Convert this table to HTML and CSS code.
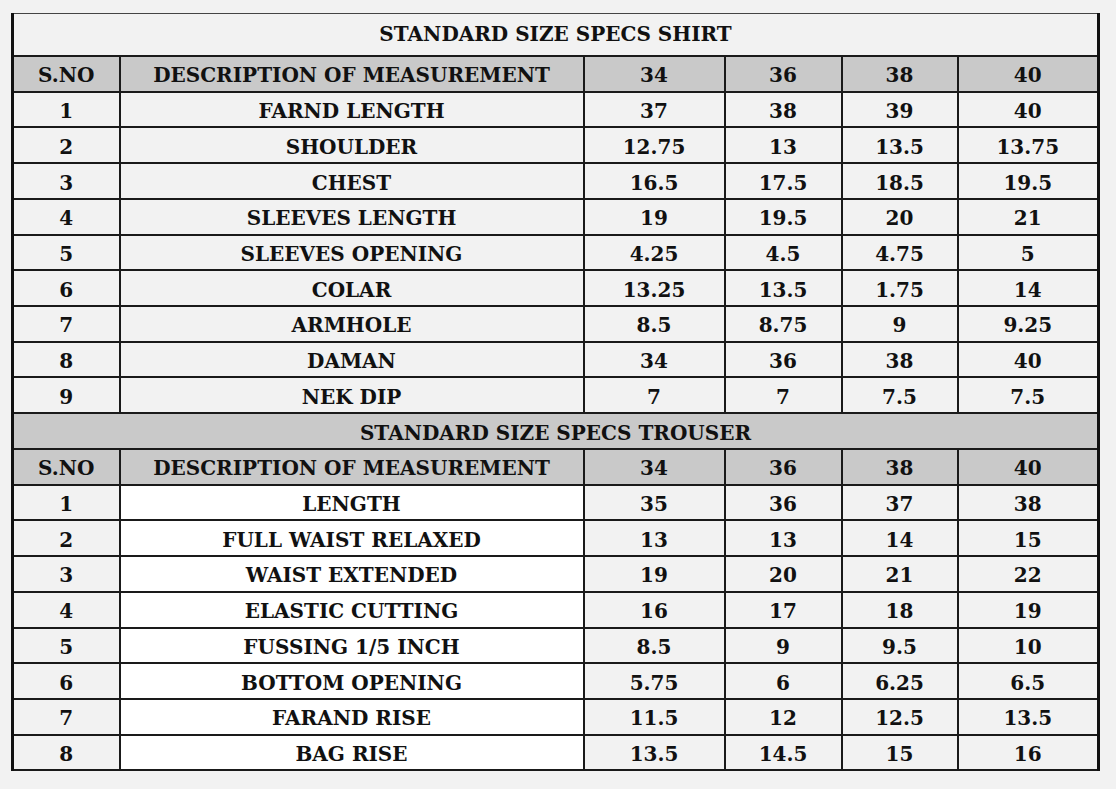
FILE: index.html
```html
<!DOCTYPE html>
<html>
<head>
<meta charset="utf-8">
<link rel="stylesheet" href="styles.css">
</head>
<body>
<table class="specs">
  <colgroup>
    <col class="c-sno"><col class="c-desc"><col class="c-34"><col class="c-36"><col class="c-38"><col class="c-40">
  </colgroup>
  <tbody>
    <tr class="title first"><td colspan="6">STANDARD SIZE SPECS SHIRT</td></tr>
    <tr class="head"><td>S.NO</td><td>DESCRIPTION OF MEASUREMENT</td><td>34</td><td>36</td><td>38</td><td>40</td></tr>
    <tr><td>1</td><td>FARND LENGTH</td><td>37</td><td>38</td><td>39</td><td>40</td></tr>
    <tr><td>2</td><td>SHOULDER</td><td>12.75</td><td>13</td><td>13.5</td><td>13.75</td></tr>
    <tr><td>3</td><td>CHEST</td><td>16.5</td><td>17.5</td><td>18.5</td><td>19.5</td></tr>
    <tr><td>4</td><td>SLEEVES LENGTH</td><td>19</td><td>19.5</td><td>20</td><td>21</td></tr>
    <tr><td>5</td><td>SLEEVES OPENING</td><td>4.25</td><td>4.5</td><td>4.75</td><td>5</td></tr>
    <tr><td>6</td><td>COLAR</td><td>13.25</td><td>13.5</td><td>1.75</td><td>14</td></tr>
    <tr><td>7</td><td>ARMHOLE</td><td>8.5</td><td>8.75</td><td>9</td><td>9.25</td></tr>
    <tr><td>8</td><td>DAMAN</td><td>34</td><td>36</td><td>38</td><td>40</td></tr>
    <tr><td>9</td><td>NEK DIP</td><td>7</td><td>7</td><td>7.5</td><td>7.5</td></tr>
    <tr class="title gray"><td colspan="6">STANDARD SIZE SPECS TROUSER</td></tr>
    <tr class="head"><td>S.NO</td><td>DESCRIPTION OF MEASUREMENT</td><td>34</td><td>36</td><td>38</td><td>40</td></tr>
    <tr class="tr"><td>1</td><td>LENGTH</td><td>35</td><td>36</td><td>37</td><td>38</td></tr>
    <tr class="tr"><td>2</td><td>FULL WAIST RELAXED</td><td>13</td><td>13</td><td>14</td><td>15</td></tr>
    <tr class="tr"><td>3</td><td>WAIST EXTENDED</td><td>19</td><td>20</td><td>21</td><td>22</td></tr>
    <tr class="tr"><td>4</td><td>ELASTIC CUTTING</td><td>16</td><td>17</td><td>18</td><td>19</td></tr>
    <tr class="tr"><td>5</td><td>FUSSING 1/5 INCH</td><td>8.5</td><td>9</td><td>9.5</td><td>10</td></tr>
    <tr class="tr"><td>6</td><td>BOTTOM OPENING</td><td>5.75</td><td>6</td><td>6.25</td><td>6.5</td></tr>
    <tr class="tr"><td>7</td><td>FARAND RISE</td><td>11.5</td><td>12</td><td>12.5</td><td>13.5</td></tr>
    <tr class="tr"><td>8</td><td>BAG RISE</td><td>13.5</td><td>14.5</td><td>15</td><td>16</td></tr>
  </tbody>
</table>
</body>
</html>
```

FILE: styles.css
```css
html, body {
  margin: 0;
  padding: 0;
  background: #f2f2f2;
}
body {
  padding: 13px 0 0 11px;
  font-family: "DejaVu Serif", "Liberation Serif", serif;
  font-weight: bold;
  color: #111;
}
.specs {
  border-collapse: collapse;
  table-layout: fixed;
  width: 1089px;
  border-left: 3px solid #111;
  border-right: 3px solid #111;
  border-top: 1px solid #444;
  border-bottom: 2px solid #111;
}
.c-sno { width: 107px; }
.c-desc { width: 464px; }
.c-34 { width: 141px; }
.c-36 { width: 117px; }
.c-38 { width: 116px; }
.c-40 { width: 141px; }
.specs td {
  border: 2px solid #1a1a1a;
  height: 30.72px;
  padding: 3px 0 0 0;
  text-align: center;
  font-size: 20px;
  line-height: 20px;
  background: #f2f2f2;
  white-space: nowrap;
}
.specs tr.first td {
  height: 40px;
  border-top: 1px solid #444;
  padding: 0 0 1px 0;
}
.specs tr.head td,
.specs tr.gray td {
  background: #c9c9c9;
}
.specs tr.tr td:nth-child(2) {
  background: #ffffff;
}
```
